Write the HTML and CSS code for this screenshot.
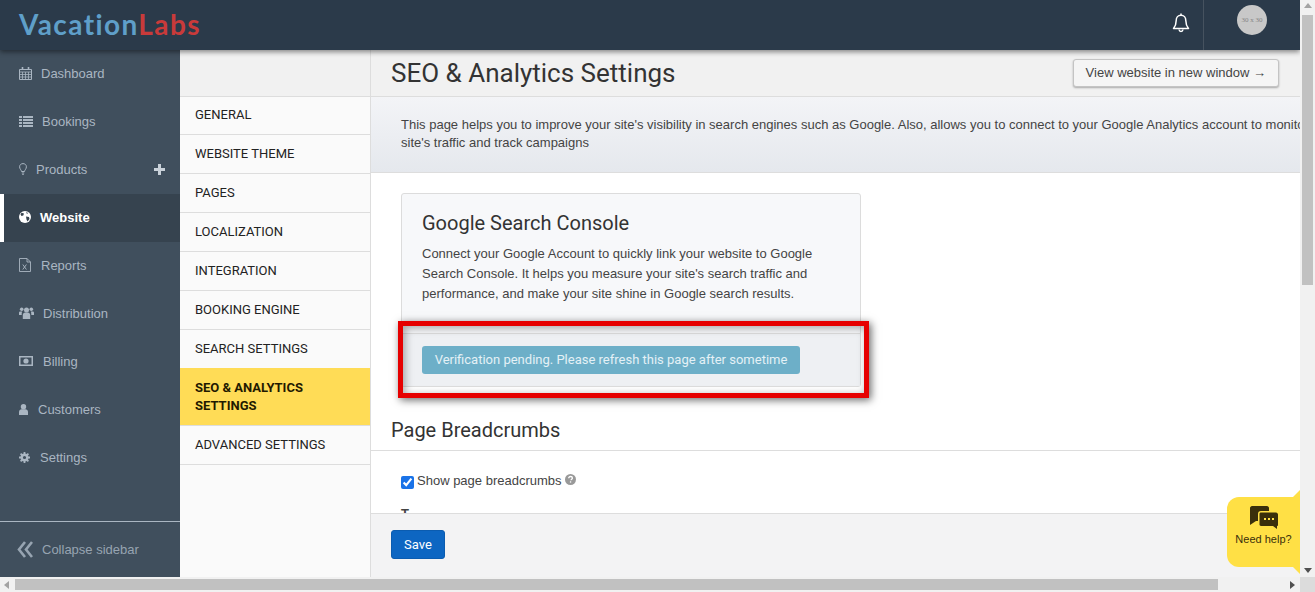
FILE: index.html
```html
<!DOCTYPE html>
<html lang="en">
<head>
    <meta charset="UTF-8">
    <meta name="viewport" content="width=device-width, initial-scale=1.0">
    <title>SEO &amp; Analytics Settings</title>
    <link rel="stylesheet" href="styles.css">
</head>
<body>
    <div class="window">
        <div class="app">
            <header class="topbar">
                <div class="logo"><span class="logo-blue">Vacation</span><span class="logo-red">Labs</span></div>
                <div class="topbar-right">
                    <div class="bell">
                        <svg width="18" height="20" viewBox="0 0 18 20" fill="none" stroke="#fff" stroke-width="1.5"><path d="M9 2.200c-3 0-4.800 2.300-4.800 5.200 0 4.500-1.200 6.200-2.700 8h15c-1.500-1.800-2.700-3.500-2.700-8 0-2.900-1.800-5.200-4.800-5.200z" stroke-linejoin="round"/><path d="M9 .5v1.700"/><path d="M7 16.500c.2 1.300 1 2 2 2s1.800-.7 2-2"/></svg>
                    </div>
                    <div class="user"><div class="avatar">30 x 30</div></div>
                </div>
            </header>
            <div class="body-row">
                <nav class="sidebar">
                    <a class="side-item">
                        <svg class="ico" width="13" height="13" viewBox="0 0 13 13" fill="none" stroke="currentColor"><path d="M.5 2.500h12v10H.5z"/><path d="M.5 5h12M.5 7.500h12M.5 10h12M3.500 5v7.500M6.500 5v7.500M9.500 5v7.500" stroke-width=".8"/><path d="M3.500 0v3M9.500 0v3" stroke-width="1.600"/></svg>
                        Dashboard
                    </a>
                    <a class="side-item">
                        <svg class="ico" width="14" height="11" viewBox="0 0 14 11" fill="currentColor"><path d="M0 0h3v2H0zM4 0h10v2H4zM0 3h3v2H0zM4 3h10v2H4zM0 6h3v2H0zM4 6h10v2H4zM0 9h3v2H0zM4 9h10v2H4z"/></svg>
                        Bookings
                    </a>
                    <a class="side-item">
                        <svg class="ico" width="8" height="12" viewBox="0 0 8 12" fill="none" stroke="currentColor"><path d="M2.500 8.500C2.300 6.800.6 6 .6 3.800.6 1.900 2.100.6 4 .6s3.400 1.300 3.400 3.200c0 2.200-1.700 3-1.900 4.700z"/><path d="M2.800 10h2.400M3.300 11.500h1.400"/></svg>
                        Products
                        <svg class="side-plus" width="11" height="11" viewBox="0 0 11 11" fill="currentColor"><path d="M4 0h3v4h4v3H7v4H4V7H0V4h4z"/></svg>
                    </a>
                    <a class="side-item active">
                        <svg class="ico" width="12" height="12" viewBox="0 0 12 12"><circle cx="6" cy="6" r="6" fill="#fff"/><path d="M2.500 1.800 5 2.500 4.300 4.500 2.500 5 1.500 3.500zM7 5.500l3 .5.500 2-2 2.500-1-2zM7 1l2 1-1 1z" fill="#36434f"/></svg>
                        Website
                    </a>
                    <a class="side-item">
                        <svg class="ico ico-wide" width="12" height="14" viewBox="0 0 12 14" fill="none" stroke="currentColor" stroke-width=".9"><path d="M.5.500h7.500l3.500 3.500v9.500H.5z"/><path d="M8 .5V4h3.500"/><path d="M3.800 6.500l3.600 5M7.400 6.500l-3.600 5"/></svg>
                        Reports
                    </a>
                    <a class="side-item">
                        <svg class="ico" width="15" height="12" viewBox="0 0 15 12" fill="currentColor"><circle cx="7.500" cy="3" r="2.500"/><circle cx="2.700" cy="2.300" r="1.800"/><circle cx="12.300" cy="2.300" r="1.800"/><path d="M3.800 12V8c0-1.500 1.200-2.500 2.500-2.500h2.400c1.300 0 2.500 1 2.500 2.500v4zM0 8V5.800c0-.8.700-1.300 1.300-1.300h1.900c-.3.700-.5 1.200-.5 3.500zM15 8V5.800c0-.8-.7-1.300-1.300-1.300h-1.900c.3.700.5 1.200.5 3.500z"/></svg>
                        Distribution
                    </a>
                    <a class="side-item">
                        <svg class="ico ico-wide" width="14" height="10" viewBox="0 0 14 10"><path d="M0 0h14v10H0z" fill="currentColor"/><path d="M1.500 1.500h11v7h-11z" fill="#404f5d"/><circle cx="7" cy="5" r="2.600" fill="currentColor"/></svg>
                        Billing
                    </a>
                    <a class="side-item">
                        <svg class="ico ico-wide" width="9" height="11" viewBox="0 0 9 11" fill="currentColor"><circle cx="4.500" cy="2.700" r="2.700"/><path d="M0 11V8c0-1.800 1.300-2.800 2.500-2.800h4C7.700 5.200 9 6.200 9 8v3z"/></svg>
                        Customers
                    </a>
                    <a class="side-item">
                        <svg class="ico ico-wide" width="11" height="11" viewBox="0 0 11 11" fill="none" stroke="currentColor"><circle cx="5.500" cy="5.500" r="2.800" stroke-width="2.400"/><path d="M5.500 0v11M0 5.500h11M1.600 1.600l7.800 7.800M9.400 1.600l-7.800 7.800" stroke-width="1.800" stroke-dasharray="2 7"/></svg>
                        Settings
                    </a>
                    <a class="collapse">
                        <svg class="ico" width="16" height="17" viewBox="0 0 16 17" fill="none" stroke="currentColor" stroke-width="2.600"><path d="M8 1 2 8.500 8 16M15 1 9 8.500 15 16"/></svg>
                        Collapse sidebar
                    </a>
                </nav>
                <div class="submenu">
                    <a class="sub-item">General</a>
                    <a class="sub-item">Website Theme</a>
                    <a class="sub-item">Pages</a>
                    <a class="sub-item">Localization</a>
                    <a class="sub-item">Integration</a>
                    <a class="sub-item">Booking Engine</a>
                    <a class="sub-item">Search Settings</a>
                    <a class="sub-item current">SEO &amp; Analytics Settings</a>
                    <a class="sub-item">Advanced Settings</a>
                </div>
                <main class="content">
                    <div class="title-bar">
                        <h1>SEO &amp; Analytics Settings</h1>
                        <button class="btn-view">View website in new window →</button>
                    </div>
                    <div class="intro">
                        <p>This page helps you to improve your site's visibility in search engines such as Google. Also, allows you to connect to your Google Analytics account to monitor your site's traffic and track campaigns</p>
                    </div>
                    <div class="scroll-area">
                        <div class="card">
                            <div class="card-body">
                                <h3>Google Search Console</h3>
                                <p>Connect your Google Account to quickly link your website to Google Search Console. It helps you measure your site's search traffic and performance, and make your site shine in Google search results.</p>
                            </div>
                            <div class="card-foot">
                                <button class="btn-pending">Verification pending. Please refresh this page after sometime</button>
                            </div>
                        </div>
                        <h2>Page Breadcrumbs</h2>
                        <div class="section">
                            <label class="check-row">
                                <input type="checkbox" checked>
                                <span>Show page breadcrumbs</span>
                                <svg class="help" width="11" height="11" viewBox="0 0 11 11"><circle cx="5.500" cy="5.500" r="5.500" fill="#999"/><path d="M3.700 4.200c0-1.100.8-1.700 1.900-1.700s1.800.6 1.800 1.500c0 1.200-1.400 1.200-1.400 2.200" fill="none" stroke="#fff" stroke-width="1.300"/><path d="M4.900 7.300h1.300v1.300H4.900z" fill="#fff"/></svg>
                            </label>
                            <div class="next-label">T</div>
                        </div>
                    </div>
                    <div class="footer-bar">
                        <button class="btn-save">Save</button>
                    </div>
                </main>
            </div>
        </div>
        <div class="vscroll">
            <span class="arrow-up"></span>
            <div class="vthumb"></div>
            <span class="arrow-down"></span>
        </div>
        <div class="hscroll">
            <span class="arrow-left"></span>
            <div class="hthumb"></div>
            <span class="arrow-right"></span>
        </div>
        <div class="corner"></div>

        <div class="red-box"></div>
        <div class="help-bubble">
            <svg width="28" height="23" viewBox="0 0 28 23" fill="#3a2f0b"><path d="M2 0h15c1 0 2 1 2 2v3H11C9 5 8 6 8 8v7H6l-6 4V2C0 1 1 0 2 0z"/><path d="M11 6.500h15c1 0 2 1 2 2V19c0 .8-.5 1-1 1v3l-4-3H11c-1 0-1.500-.8-1.500-1.500V8c0-1 .5-1.500 1.500-1.500z"/><path d="M14 12h2v2h-2zM18 12h2v2h-2zM22 12h2v2h-2z" fill="#ffe045"/></svg>
            <span>Need help?</span>
        </div>
    </div>
</body>
</html>
```

FILE: styles.css
```css
* {
    box-sizing: border-box;
}
html, body {
    margin: 0;
    padding: 0;
    overflow: hidden;
}
body {
    font-family: 'Liberation Sans', Arial, sans-serif;
    font-size: 13px;
    color: #444;
    background: #fff;
}
.window {
    position: relative;
    width: 1315px;
    height: 592px;
    display: grid;
    grid-template-columns: 1300px 15px;
    grid-template-rows: 577px 15px;
    overflow: hidden;
}
.app {
    display: flex;
    flex-direction: column;
    min-height: 0;
    overflow: hidden;
}

/* top bar */
.topbar {
    height: 50px;
    flex-shrink: 0;
    background: #2b3a4a;
    display: flex;
    justify-content: space-between;
    align-items: stretch;
    box-shadow: 0 2px 5px rgba(0, 0, 0, 0.45);
    position: relative;
    z-index: 2;
}
.logo {
    margin-left: 19px;
    font-family: 'Lato', sans-serif;
    font-size: 28px;
    font-weight: 700;
    letter-spacing: 1.4px;
    line-height: 49px;
}
.logo-blue {
    color: #5f9fc9;
}
.logo-red {
    color: #c93a3a;
}
.topbar-right {
    display: flex;
}
.bell {
    width: 46px;
    display: flex;
    align-items: center;
    justify-content: center;
    padding: 0 0 5px 2px;
}
.user {
    width: 97px;
    border-left: 1px solid #46525f;
    padding: 5px 0 0 33px;
}
.avatar {
    width: 30px;
    height: 30px;
    border-radius: 50%;
    background: #c8c8c8;
    color: #858585;
    font-family: 'Liberation Serif', serif;
    font-size: 7px;
    line-height: 30px;
    text-align: center;
    white-space: nowrap;
}

.body-row {
    flex: 1;
    display: flex;
    min-height: 0;
}

/* left sidebar */
.sidebar {
    width: 180px;
    flex-shrink: 0;
    background: #404f5d;
    color: #aab6c2;
    display: flex;
    flex-direction: column;
}
.side-item {
    height: 48px;
    flex-shrink: 0;
    padding: 0 0 2px 19px;
    display: flex;
    align-items: center;
    position: relative;
}
.ico {
    flex-shrink: 0;
    margin-right: 9px;
}
.ico-wide {
    margin-right: 10px;
}
.side-item.active {
    background: #36434f;
    border-left: 4px solid #fff;
    padding-left: 15px;
    color: #fff;
    font-weight: bold;
}
.side-plus {
    position: absolute;
    right: 15px;
    top: 18px;
    color: #c9d1d9;
}
.collapse {
    margin-top: auto;
    height: 56px;
    border-top: 1px solid #aab6c2;
    padding-left: 17px;
    display: flex;
    align-items: center;
    color: #97a4b1;
}

/* second column */
.submenu {
    width: 191px;
    flex-shrink: 0;
    background: #fafafa;
    border-right: 1px solid #ddd;
    padding-top: 46px;
    position: relative;
}
.submenu::before {
    content: "";
    display: block;
    position: absolute;
    top: 0;
    left: 0;
    right: 0;
    height: 46px;
    background: #f1f1f1;
}
.sub-item {
    display: block;
    padding: 11px 15px;
    border-top: 1px solid #ddd;
    font-family: 'Roboto', sans-serif;
    font-size: 13px;
    line-height: 16px;
    color: #222;
    text-transform: uppercase;
}
.sub-item:first-child {
    padding-top: 10px;
}
.sub-item.current {
    background: #ffdc56;
    border-top-color: #ffdc56;
    font-weight: bold;
    line-height: 18px;
    padding: 10px 15px;
    color: #1f1a00;
}
.sub-item:last-child {
    border-bottom: 1px solid #ddd;
}

/* main column */
.content {
    flex: 1;
    min-width: 0;
    display: flex;
    flex-direction: column;
    overflow: hidden;
}
.title-bar {
    height: 47px;
    flex-shrink: 0;
    background: #f1f1f1;
    border-bottom: 1px solid #ddd;
    padding: 0 21px 0 20px;
    display: flex;
    justify-content: space-between;
    align-items: flex-start;
}
h1 {
    margin: 0;
    font-family: 'Roboto', sans-serif;
    font-size: 26px;
    font-weight: 400;
    line-height: 46px;
    color: #333;
}
.btn-view {
    margin-top: 9px;
    height: 28px;
    padding: 0 12px 2px;
    background: #f5f5f5;
    border: 1px solid #c4c4c4;
    border-radius: 3px;
    box-shadow: 0 1px 2px rgba(0, 0, 0, 0.3);
    font-family: 'Liberation Sans', sans-serif;
    font-size: 13px;
    color: #444;
}
.intro {
    height: 76px;
    flex-shrink: 0;
    background: linear-gradient(#f3f4f7, #e5e8ed);
    border-bottom: 1px solid #ddd;
    padding: 19px 0 0 30px;
    overflow: hidden;
}
.intro p {
    margin: 0;
    width: 960px;
    line-height: 18px;
    color: #444;
}
.scroll-area {
    flex: 1;
    min-height: 0;
    overflow: hidden;
    background: #fff;
    padding-top: 20px;
}
.card {
    width: 460px;
    height: 194px;
    margin-left: 30px;
    background: #f7f8fa;
    border: 1px solid #dcdcdc;
    border-radius: 3px;
    display: flex;
    flex-direction: column;
}
.card-body {
    padding: 17px 20px 0;
    height: 139px;
}
.card-body h3 {
    margin: 0 0 9px;
    font-family: 'Roboto', sans-serif;
    font-size: 20px;
    font-weight: 400;
    line-height: 24px;
    color: #333;
}
.card-body p {
    margin: 0;
    line-height: 20px;
    color: #444;
}
.card-foot {
    flex: 1;
    background: #eef0f3;
    border-top: 1px solid #dcdcdc;
    padding: 12px 20px 0;
}
.btn-pending {
    height: 28px;
    width: 378px;
    padding: 0 0 2px;
    background: #6dafc8;
    border: none;
    border-radius: 3px;
    font-family: 'Roboto', sans-serif;
    font-size: 13px;
    color: #e4f1f6;
}
h2 {
    margin: 0;
    padding: 31px 0 0 20px;
    height: 64px;
    border-bottom: 1px solid #ddd;
    font-family: 'Roboto', sans-serif;
    font-size: 20px;
    font-weight: 400;
    line-height: 24px;
    color: #333;
}
.section {
    padding: 22px 0 0 30px;
}
.check-row {
    display: flex;
    align-items: flex-start;
    height: 28px;
    line-height: 16px;
}
.check-row input {
    margin: 3px 3px 0 0;
    width: 13px;
    height: 13px;
    accent-color: #1a73e8;
}
.help {
    margin: 1px 0 0 3px;
}
.next-label {
    line-height: 16px;
    font-weight: bold;
    color: #444;
    padding-top: 5px;
}
.footer-bar {
    height: 64px;
    flex-shrink: 0;
    background: #f3f3f4;
    border-top: 1px solid #ddd;
    padding: 16px 0 0 20px;
}
.btn-save {
    width: 54px;
    height: 29px;
    background: #0d66c2;
    border: 1px solid #0b5cb0;
    border-radius: 3px;
    font-family: 'Roboto', sans-serif;
    font-size: 13px;
    color: #fff;
}

/* browser scrollbars */
.vscroll {
    background: #f1f1f1;
    position: relative;
}
.vthumb {
    position: absolute;
    top: 15px;
    left: 2px;
    width: 11px;
    height: 270px;
    background: #c1c1c1;
}
.hscroll {
    background: #f1f1f1;
    position: relative;
}
.hthumb {
    position: absolute;
    left: 15px;
    top: 2px;
    width: 1203px;
    height: 11px;
    background: #c1c1c1;
}
.corner {
    background: #dcdcdc;
}
.arrow-up, .arrow-down, .arrow-left, .arrow-right {
    position: absolute;
    width: 0;
    height: 0;
    border: 4px solid transparent;
}
.arrow-up {
    top: 3px;
    left: 3.500px;
    border-top: 0;
    border-bottom: 5px solid #a3a3a3;
}
.arrow-down {
    bottom: 4px;
    left: 3.500px;
    border-bottom: 0;
    border-top: 5px solid #505050;
}
.arrow-left {
    left: 4px;
    top: 3.500px;
    border-left: 0;
    border-right: 5px solid #a3a3a3;
}
.arrow-right {
    right: 5px;
    top: 3.500px;
    border-right: 0;
    border-left: 5px solid #505050;
}

/* things lying over the page */
.red-box {
    position: absolute;
    left: 398px;
    top: 321px;
    width: 471px;
    height: 77px;
    border: 5px solid #e60000;
    box-shadow: 2px 2px 8px rgba(0, 0, 0, 0.6), inset 2px 2px 8px rgba(0, 0, 0, 0.35);
}
.help-bubble {
    position: absolute;
    left: 1227px;
    top: 497px;
    width: 73px;
    height: 70px;
    background: #ffe045;
    border-radius: 12px 0 0 12px;
    display: flex;
    flex-direction: column;
    align-items: center;
    padding-top: 9px;
    color: #3a2f0b;
    font-size: 11px;
}
.help-bubble span {
    margin-top: 3px;
    line-height: 14px;
    white-space: nowrap;
}
.help-bubble::before, .help-bubble::after {
    content: "";
    position: absolute;
    right: 0;
    width: 0;
    height: 0;
    border-left: 7px solid transparent;
}
.help-bubble::before {
    top: -7px;
    border-bottom: 7px solid #ffe045;
}
.help-bubble::after {
    bottom: -7px;
    border-top: 7px solid #ffe045;
}
```
